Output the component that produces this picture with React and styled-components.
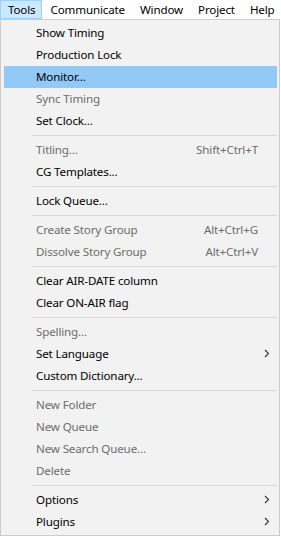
import styled, { createGlobalStyle } from "styled-components";

const GlobalStyle = createGlobalStyle`
  html, body {
    margin: 0;
    padding: 0;
    background: #ffffff;
  }
  body {
    font-family: "Noto Sans", "Segoe UI", sans-serif;
    font-size: 11.6px;
    letter-spacing: -0.15px;
    color: #000;
  }
`;

const Screen = styled.div`
  width: 281px;
  height: 536px;
  overflow: hidden;
  display: flex;
  flex-direction: column;
`;

const MenuBar = styled.div`
  display: flex;
  height: 19px;
  background: #fff;
`;

const MenuBarItem = styled.div`
  height: 19px;
  box-sizing: border-box;
  padding: 0 6px 1px 7px;
  display: flex;
  align-items: center;
  border: 1px solid ${({ $active }) => ($active ? "#99d1ff" : "transparent")};
  background: ${({ $active }) => ($active ? "#cce8ff" : "transparent")};
  white-space: nowrap;
`;

const Dropdown = styled.div`
  width: 280px;
  box-sizing: border-box;
  border: 1px solid #cccccc;
  background: #f2f2f2;
  padding: 2px 2px 2px 3px;
  display: flex;
  flex-direction: column;
`;

const Item = styled.div`
  height: 22px;
  box-sizing: border-box;
  padding-bottom: 1px;
  display: grid;
  grid-template-columns: 32px 1fr auto 19px;
  align-items: center;
  background: ${({ $hover }) => ($hover ? "#91c9f7" : "transparent")};
  color: ${({ $disabled }) => ($disabled ? "#6d6d6d" : "#000")};
  white-space: nowrap;
`;

const Label = styled.span`
  grid-column: 2;
`;

const Shortcut = styled.span`
  grid-column: 3;
`;

const Arrow = styled.span`
  grid-column: 4;
  display: flex;
  justify-content: center;
  padding-right: 1px;
`;

const Separator = styled.div`
  height: 7px;
  display: flex;
  align-items: center;
  padding-left: 28px;

  &::after {
    content: "";
    flex: 1;
    height: 1px;
    background: #d7d7d7;
  }
`;

function Chevron() {
  return (
    <svg width="6" height="9" viewBox="0 0 6 9">
      <polyline points="1,1 4.5,4.5 1,8" fill="none" stroke="#333" strokeWidth="1.1" />
    </svg>
  );
}

const menu = [
  { label: "Show Timing" },
  { label: "Production Lock" },
  { label: "Monitor...", hover: true },
  { label: "Sync Timing", disabled: true },
  { label: "Set Clock..." },
  "sep",
  { label: "Titling...", shortcut: "Shift+Ctrl+T", disabled: true },
  { label: "CG Templates..." },
  "sep",
  { label: "Lock Queue..." },
  "sep",
  { label: "Create Story Group", shortcut: "Alt+Ctrl+G", disabled: true },
  { label: "Dissolve Story Group", shortcut: "Alt+Ctrl+V", disabled: true },
  "sep",
  { label: "Clear AIR-DATE column" },
  { label: "Clear ON-AIR flag" },
  "sep",
  { label: "Spelling...", disabled: true },
  { label: "Set Language", sub: true },
  { label: "Custom Dictionary..." },
  "sep",
  { label: "New Folder", disabled: true },
  { label: "New Queue", disabled: true },
  { label: "New Search Queue...", disabled: true },
  { label: "Delete", disabled: true },
  "sep",
  { label: "Options", sub: true },
  { label: "Plugins", sub: true },
];

const bar = ["Tools", "Communicate", "Window", "Project", "Help"];

export default function App() {
  return (
    <>
      <GlobalStyle />
      <Screen>
        <MenuBar>
          {bar.map((name, i) => (
            <MenuBarItem key={name} $active={i === 0}>
              {name}
            </MenuBarItem>
          ))}
        </MenuBar>
        <Dropdown>
          {menu.map((entry, i) =>
            entry === "sep" ? (
              <Separator key={i} />
            ) : (
              <Item key={i} $hover={entry.hover} $disabled={entry.disabled}>
                <Label>{entry.label}</Label>
                {entry.shortcut && <Shortcut>{entry.shortcut}</Shortcut>}
                {entry.sub && (
                  <Arrow>
                    <Chevron />
                  </Arrow>
                )}
              </Item>
            )
          )}
        </Dropdown>
      </Screen>
    </>
  );
}
